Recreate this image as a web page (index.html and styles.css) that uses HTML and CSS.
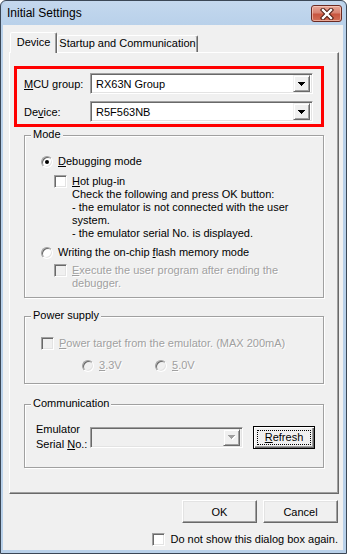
FILE: index.html
```html
<!DOCTYPE html>
<html>
<head>
<meta charset="utf-8">
<link rel="stylesheet" href="styles.css">
</head>
<body>
<div class="window">
  <div class="titlebar">
    <span class="title">Initial Settings</span>
    <div class="close">
      <svg width="14" height="12" viewBox="0 0 14 12">
        <path d="M3 2L11 10M11 2L3 10" stroke="#4a1a12" stroke-width="4.4" stroke-linecap="square" fill="none"/>
        <path d="M3 2L11 10M11 2L3 10" stroke="#ffffff" stroke-width="2.4" stroke-linecap="square" fill="none"/>
      </svg>
    </div>
  </div>
  <div class="client">
    <div class="tabs">
      <div class="tab active">Device</div>
      <div class="tab">Startup and Communication</div>
    </div>
    <div class="panel">
      <div class="highlight">
        <div class="field-row">
          <span class="field-label"><u>M</u>CU group:</span>
          <div class="combo">
            <span class="combo-text">RX63N Group</span>
            <span class="dropbtn"><svg width="7" height="4" viewBox="0 0 7 4"><path d="M0 0h7v1h-1v1h-1v1h-1v1h-1v-1h-1v-1h-1v-1h-1z" fill="#000"/></svg></span>
          </div>
        </div>
        <div class="field-row">
          <span class="field-label">De<u>v</u>ice:</span>
          <div class="combo">
            <span class="combo-text">R5F563NB</span>
            <span class="dropbtn"><svg width="7" height="4" viewBox="0 0 7 4"><path d="M0 0h7v1h-1v1h-1v1h-1v1h-1v-1h-1v-1h-1v-1h-1z" fill="#000"/></svg></span>
          </div>
        </div>
      </div>

      <div class="group mode">
        <span class="legend">Mode</span>
        <div class="opt">
          <span class="radio"><span class="dot"></span></span>
          <span><u>D</u>ebugging mode</span>
        </div>
        <div class="chkblock hot">
          <span class="chk"></span>
          <div class="chktext">
            <div><u>H</u>ot plug-in</div>
            <div>Check the following and press OK button:</div>
            <div>- the emulator is not connected with the user</div>
            <div>system.</div>
            <div>- the emulator serial No. is displayed.</div>
          </div>
        </div>
        <div class="opt writing">
          <span class="radio"></span>
          <span>Writing the on-chip <u>f</u>lash memory mode</span>
        </div>
        <div class="chkblock exec disabled">
          <span class="chk off"></span>
          <div class="chktext">
            <div><u>E</u>xecute the user program after ending the</div>
            <div>debugger.</div>
          </div>
        </div>
      </div>

      <div class="group power">
        <span class="legend">Power supply</span>
        <div class="opt disabled">
          <span class="chk off"></span>
          <span><u>P</u>ower target from the emulator. (MAX 200mA)</span>
        </div>
        <div class="radios disabled">
          <div class="opt v33">
            <span class="radio off"></span>
            <span><u>3</u>.3V</span>
          </div>
          <div class="opt">
            <span class="radio off"></span>
            <span><u>5</u>.0V</span>
          </div>
        </div>
      </div>

      <div class="group comm">
        <span class="legend">Communication</span>
        <div class="comm-row">
          <div class="comm-label">Emulator<br>Serial <u>N</u>o.:</div>
          <div class="combo small off">
            <span class="combo-text"></span>
            <span class="dropbtn"><svg width="8" height="5" viewBox="0 0 8 5"><path d="M1 1h7v1h-1v1h-1v1h-1v1h-1v-1h-1v-1h-1v-1h-1z" fill="#ffffff"/><path d="M0 0h7v1h-1v1h-1v1h-1v1h-1v-1h-1v-1h-1v-1h-1z" fill="#a0a0a0"/></svg></span>
          </div>
          <div class="defbtn"><span class="focus"><u>R</u>efresh</span></div>
        </div>
      </div>
    </div>

    <div class="btnrow">
      <div class="btn">OK</div>
      <div class="btn">Cancel</div>
    </div>
    <div class="dontshow">
      <span class="chk"></span>
      <span>Do not show this dialog box again.</span>
    </div>
  </div>
</div>
</body>
</html>
```

FILE: styles.css
```css
* { box-sizing: border-box; }
html, body { margin: 0; padding: 0; }
body {
  width: 347px;
  height: 554px;
  overflow: hidden;
  font-family: "Liberation Sans", Arial, sans-serif;
  font-size: 11px;
  color: #000;
  background: #ffffff;
}
u { text-decoration: underline; text-underline-offset: 1px; }

.window {
  width: 347px;
  height: 554px;
  border: 1px solid #3b4756;
  border-radius: 6px 6px 0 0;
  background: #b9d1ea;
  padding: 0 3px 3px 2px;
  display: flex;
  flex-direction: column;
}

.titlebar {
  height: 24px;
  flex: none;
  display: flex;
  align-items: flex-start;
  justify-content: space-between;
  padding-left: 4px;
  background: linear-gradient(#c4d8ee, #b9d1ea);
  border-radius: 5px 5px 0 0;
}
.title {
  font-size: 12px;
  line-height: 24px;
  color: #000;
}
.close {
  width: 31px;
  height: 17px;
  margin-top: 4px;
  margin-right: 1px;
  border: 1px solid #6b2a22;
  border-radius: 3px;
  background: linear-gradient(#e7a797 0%, #d88372 45%, #c8553f 55%, #d26f57 100%);
  box-shadow: inset 0 0 0 1px rgba(255, 220, 210, 0.55);
  display: flex;
  align-items: center;
  justify-content: center;
}

.client {
  flex: 1;
  background: #f0f0f0;
  padding: 0 4px 0 6px;
  display: flex;
  flex-direction: column;
}

.tabs {
  display: flex;
  align-items: flex-end;
  height: 20px;
  margin-top: 7px;
  padding-left: 1px;
}
.tab {
  height: 17px;
  width: 141px;
  border: 1px solid;
  border-bottom: none;
  border-color: #ffffff #696969 transparent #ffffff;
  border-radius: 2px 2px 0 0;
  box-shadow: inset -1px 0 #a0a0a0;
  line-height: 15px;
  text-align: center;
  background: #f0f0f0;
}
.tab.active {
  width: 47px;
  height: 21px;
  margin-bottom: -1px;
  padding-top: 2px;
  position: relative;
  z-index: 1;
}

.panel {
  width: 330px;
  height: 442px;
  flex: none;
  border: 1px solid;
  border-color: #ffffff #696969 #696969 #ffffff;
  box-shadow: inset -1px -1px #a0a0a0;
  padding: 13px 0 0 4px;
}

.highlight {
  width: 310px;
  height: 61px;
  border: 3px solid #ff0000;
  padding: 4px 0 0 7px;
  display: flex;
  flex-direction: column;
  gap: 7px;
}
.field-row {
  display: flex;
  align-items: center;
  height: 21px;
}
.field-label { width: 66px; }

.combo {
  width: 223px;
  height: 21px;
  border: 1px solid;
  border-color: #a0a0a0 #ffffff #ffffff #a0a0a0;
  box-shadow: inset 1px 1px #696969, inset -1px -1px #e3e3e3;
  background: #ffffff;
  display: flex;
  align-items: center;
  padding: 2px;
}
.combo.small { width: 153px; }
.combo.off { background: #f0f0f0; }
.combo-text { flex: 1; padding-left: 3px; }
.dropbtn {
  width: 17px;
  height: 17px;
  background: #f0f0f0;
  border: 1px solid;
  border-color: #f0f0f0 #696969 #696969 #f0f0f0;
  box-shadow: inset 1px 1px #ffffff, inset -1px -1px #a0a0a0;
  display: flex;
  align-items: center;
  justify-content: center;
}
.dropbtn svg { display: block; }

.group {
  position: relative;
  width: 300px;
  margin-left: 10px;
  border: 1px solid #a0a0a0;
  box-shadow: inset 1px 1px #ffffff, 1px 1px #ffffff;
}
.legend {
  position: absolute;
  top: -8px;
  left: 6px;
  padding: 0 2px;
  line-height: 13px;
  background: #f0f0f0;
}

.mode {
  margin-top: 8px;
  height: 163px;
  padding: 19px 0 0 16px;
}
.opt {
  display: flex;
  align-items: center;
  gap: 5px;
  height: 13px;
  line-height: 13px;
  white-space: nowrap;
}
.radio {
  width: 12px;
  height: 12px;
  flex: none;
  border-radius: 50%;
  background: #ffffff;
  border: 1px solid;
  border-color: #a0a0a0 #ffffff #ffffff #a0a0a0;
  box-shadow: inset 1px 1px #696969, inset -1px -1px #e3e3e3;
  display: flex;
  align-items: center;
  justify-content: center;
}
.radio.off { background: #f0f0f0; }
.dot {
  width: 4px;
  height: 4px;
  border-radius: 50%;
  background: #000;
}
.chk {
  width: 13px;
  height: 13px;
  flex: none;
  background: #ffffff;
  border: 1px solid;
  border-color: #a0a0a0 #ffffff #ffffff #a0a0a0;
  box-shadow: inset 1px 1px #696969, inset -1px -1px #e3e3e3;
}
.chk.off { background: #f0f0f0; }
.chkblock {
  display: flex;
  align-items: flex-start;
  gap: 5px;
  margin-left: 13px;
  line-height: 13px;
  white-space: nowrap;
}
.hot { margin-top: 7px; }
.writing { margin-top: 6px; }
.exec { margin-top: 5px; }

.disabled { color: #a0a0a0; text-shadow: 1px 1px 0 #ffffff; }

.power {
  margin-top: 18px;
  height: 68px;
  padding: 20px 0 0 16px;
}
.radios {
  display: flex;
  margin-top: 9px;
  margin-left: 41px;
}
.v33 { width: 73px; }

.comm {
  margin-top: 20px;
  height: 64px;
  padding: 17px 0 0 11px;
}
.comm-row {
  display: flex;
  align-items: flex-start;
}
.comm-label {
  width: 54px;
  line-height: 15px;
}
.comm-row .combo { margin-top: 5px; }
.defbtn {
  margin-top: 4px;
  margin-left: 10px;
  width: 62px;
  height: 23px;
  border: 1px solid #000;
  background: #f0f0f0;
  box-shadow: inset 1px 1px #ffffff, inset -1px -1px #696969, inset -2px -2px #a0a0a0;
  padding: 3px;
  display: flex;
}
.focus {
  flex: 1;
  border: 1px dotted #000;
  display: flex;
  align-items: center;
  justify-content: center;
  line-height: 13px;
}

.btnrow {
  display: flex;
  justify-content: flex-end;
  gap: 6px;
  margin-top: 6px;
  padding-right: 1px;
}
.btn {
  width: 75px;
  height: 23px;
  border: 1px solid;
  border-color: #ffffff #696969 #696969 #ffffff;
  box-shadow: inset -1px -1px #a0a0a0, inset 1px 1px #e3e3e3;
  display: flex;
  align-items: center;
  justify-content: center;
}

.dontshow {
  display: flex;
  justify-content: flex-end;
  align-items: center;
  gap: 5px;
  margin-top: 10px;
  height: 13px;
  line-height: 13px;
  padding-right: 1px;
}
```
